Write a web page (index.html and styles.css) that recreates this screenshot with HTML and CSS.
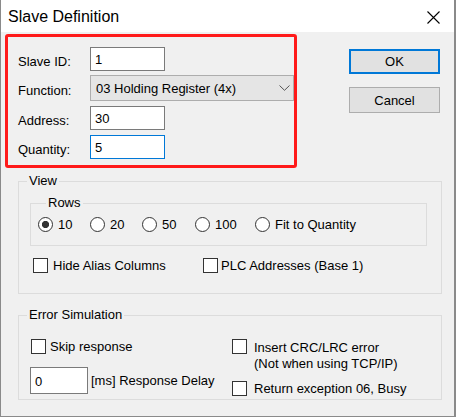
FILE: index.html
```html
<!DOCTYPE html>
<html>
<head>
<meta charset="utf-8">
<link rel="stylesheet" href="styles.css">
</head>
<body>
<div class="window">
  <div class="titlebar">
    <span class="title">Slave Definition</span>
    <svg class="close" width="13" height="13" viewBox="0 0 13 13"><path d="M0.5 0.5 L12.5 12.5 M12.5 0.5 L0.5 12.5" stroke="#000" stroke-width="1.1" fill="none"/></svg>
  </div>
  <div class="client">
    <div class="top">
      <div class="highlight">
        <div class="form">
          <label class="lbl">Slave ID:</label>
          <input class="txt" type="text" value="1">
          <label class="lbl">Function:</label>
          <div class="combo"><span>03 Holding Register (4x)</span><svg width="11" height="6" viewBox="0 0 11 6"><path d="M0.5 0.5 L5.5 5.3 L10.5 0.5" stroke="#555" stroke-width="1" fill="none"/></svg></div>
          <label class="lbl">Address:</label>
          <input class="txt" type="text" value="30">
          <label class="lbl">Quantity:</label>
          <input class="txt focus" type="text" value="5">
        </div>
      </div>
      <div class="buttons">
        <button class="btn default">OK</button>
        <button class="btn">Cancel</button>
      </div>
    </div>

    <fieldset class="group view">
      <legend>View</legend>
      <fieldset class="group rows">
        <legend>Rows</legend>
        <div class="radios">
          <label class="opt"><input type="radio" name="rows" checked>10</label>
          <label class="opt"><input type="radio" name="rows">20</label>
          <label class="opt"><input type="radio" name="rows">50</label>
          <label class="opt"><input type="radio" name="rows">100</label>
          <label class="opt"><input type="radio" name="rows">Fit to Quantity</label>
        </div>
      </fieldset>
      <div class="checks">
        <label class="opt"><input type="checkbox">Hide Alias Columns</label>
        <label class="opt"><input type="checkbox">PLC Addresses (Base 1)</label>
      </div>
    </fieldset>

    <fieldset class="group error">
      <legend>Error Simulation</legend>
      <div class="errcols">
        <div class="errleft">
          <label class="opt"><input type="checkbox">Skip response</label>
          <div class="delay"><input class="txt small" type="text" value="0"><span>[ms] Response Delay</span></div>
        </div>
        <div class="errright">
          <label class="opt top"><input type="checkbox"><span>Insert CRC/LRC error<br>(Not when using TCP/IP)</span></label>
          <label class="opt"><input type="checkbox">Return exception 06, Busy</label>
        </div>
      </div>
    </fieldset>
  </div>
</div>
</body>
</html>
```

FILE: styles.css
```css
* { box-sizing: border-box; }
html, body { margin: 0; padding: 0; background: #ffffff; }
body {
  font-family: "Liberation Sans", Arial, sans-serif;
  font-size: 13px;
  color: #000;
}
.window {
  width: 456px;
  height: 417px;
  border-left: 1px solid #8a8a8a;
  border-right: 2px solid #8a8a8a;
  border-bottom: 1px solid #8a8a8a;
  background: #f0f0f0;
  display: flex;
  flex-direction: column;
}
.titlebar {
  height: 32px;
  background: #ffffff;
  display: flex;
  align-items: center;
  padding-left: 7px;
  padding-right: 14px;
}
.title {
  font-size: 16px;
  line-height: 32px;
  flex: 1;
  padding-top: 1px;
}
.close { margin-top: 3px; }
.client {
  flex: 1;
  padding: 2px 0 0 4px;
}
.top {
  display: flex;
  align-items: flex-start;
}
.highlight {
  width: 292px;
  height: 134px;
  border: 3px solid #ff1a1a;
  border-radius: 3px;
  padding: 10px 0 4px 10px;
}
.form {
  display: grid;
  grid-template-columns: 72px auto;
  grid-template-rows: 24px 26px 24px 24px;
  row-gap: 4px;
  align-items: center;
}
.form .lbl:nth-of-type(3), .form .lbl:nth-of-type(4) { }
.form > :nth-child(5), .form > :nth-child(6) { margin-top: 2px; }
.form > :nth-child(7), .form > :nth-child(8) { margin-top: 4px; }
.lbl { padding-top: 5px; line-height: 15px; }
.txt {
  width: 75px;
  height: 24px;
  border: 1px solid #7a7a7a;
  background: #fff;
  font: inherit;
  color: #000;
  padding: 1px 4px 0 4px;
  margin: 0;
  outline: none;
}
.txt.focus { border-color: #0078d7; }
.combo {
  width: 204px;
  height: 26px;
  background: #e5e5e5;
  border: 1px solid #adadad;
  display: flex;
  align-items: center;
  justify-content: space-between;
  padding: 1px 3px 0 5px;
}
.combo svg { margin-top: -1px; }
.buttons {
  margin-left: 52px;
  margin-top: 15px;
  display: flex;
  flex-direction: column;
  gap: 13px;
}
.btn {
  width: 91px;
  height: 25px;
  background: #e1e1e1;
  border: 1px solid #adadad;
  font: inherit;
  color: #000;
  padding: 0;
  margin: 0;
}
.btn.default { border: 2px solid #0078d7; }
.btn + .btn { height: 26px; }

.group {
  margin: 0;
  border: 1px solid #dcdcdc;
  padding: 0;
  min-width: 0;
}
.group legend {
  line-height: 14px;
  padding: 0 2px;
  margin-left: 8px;
}
.view {
  width: 424px;
  margin: 6px 0 0 13px;
  padding-bottom: 20px;
}
.rows {
  width: 397px;
  margin: 8px 0 0 11px;
  padding: 7px 0 13px 7px;
}
.radios {
  display: grid;
  grid-template-columns: 52px 52px 53px 60px auto;
  height: 15px;
}
.opt {
  display: flex;
  align-items: center;
  gap: 5px;
  line-height: 15px;
  white-space: nowrap;
}
input[type=radio], input[type=checkbox] {
  -webkit-appearance: none;
  appearance: none;
  margin: 0;
  width: 15px;
  height: 15px;
  border: 1px solid #333;
  background: #fff;
  flex: none;
}
input[type=radio] { border-radius: 50%; }
input[type=radio]:checked {
  background: radial-gradient(circle, #333 0 3.3px, #fff 3.9px);
}
.checks {
  display: grid;
  grid-template-columns: 170px auto;
  margin: 12px 0 0 14px;
}
.checks .opt:last-child { gap: 3px; }
.error {
  width: 424px;
  margin: 14px 0 0 13px;
  padding: 17px 0 3px 0;
}
.errcols {
  display: flex;
}
.errleft {
  width: 213px;
  padding-left: 11px;
  display: flex;
  flex-direction: column;
}
.errleft .opt { margin-left: 1px; gap: 4px; }
.delay {
  display: flex;
  align-items: center;
  gap: 3px;
  margin-top: 13px;
}
.txt.small { width: 58px; height: 27px; padding-top: 2px; }
.errright {
  display: flex;
  flex-direction: column;
  gap: 9px;
}
.errright .opt { gap: 7px; }
.opt.top { align-items: flex-start; line-height: 16px; }
.opt.top span { margin-top: 1px; }
```
